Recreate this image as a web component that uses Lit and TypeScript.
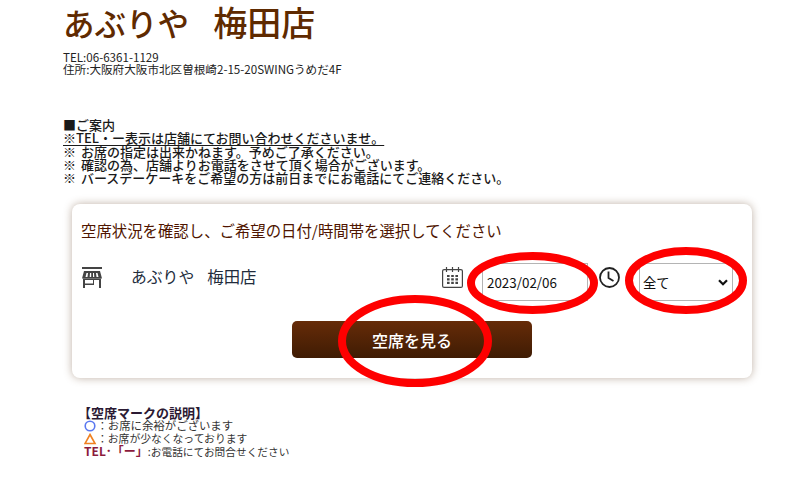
import { LitElement, html, css } from "lit";
import { customElement } from "lit/decorators.js";

@customElement("app-root")
export class AppRoot extends LitElement {
  static styles = css`
    :host {
      display: block;
      position: relative;
      width: 812px;
      height: 478px;
      overflow: hidden;
      background: #fff;
      font-family: "Noto Sans CJK JP", "Liberation Sans", sans-serif;
      color: #222;
    }
    .head { padding: 3px 0 0 63px; }
    h1 {
      margin: 0;
      font-size: 31.5px;
      line-height: 38px;
      font-weight: 500;
      color: #5f2a00;
      white-space: pre;
      word-spacing: 5px;
    }
    h1 span { font-size: 34px; line-height: 38px; }
    .contact {
      margin-top: 10px;
      font-size: 11.6px;
      line-height: 12px;
      color: #222;
    }
    .notice {
      margin: 43px 0 0 63px;
      font-size: 13px;
      line-height: 13.25px;
      font-weight: 500;
      color: #1a1a1a;
      white-space: pre;
      word-spacing: 2px;
    }
    .notice .u { text-decoration: underline; text-underline-offset: 2px; }
    .card {
      margin: 19.75px 0 0 72px;
      width: 680px;
      height: 174px;
      box-sizing: border-box;
      border-radius: 8px;
      background: #fff;
      box-shadow: 0 0 8px rgba(95, 60, 30, 0.4);
      padding: 16px 19px 0 9px;
    }
    .card h2 {
      margin: 0;
      font-size: 15.4px;
      line-height: 21px;
      font-weight: 400;
      color: #4f1500;
      white-space: nowrap;
    }
    .row {
      display: flex;
      align-items: flex-start;
      height: 38px;
      margin-top: 22px;
    }
    .store-icon { width: 20px; height: 21px; display: block; margin: 4px 0 0 1px; }
    .store {
      margin: 3px 0 0 29px;
      font-size: 15.8px;
      line-height: 20px;
      color: #222c3c;
      white-space: pre;
      word-spacing: 3px;
      flex: 1;
    }
    .store span { font-size: 16.4px; }
    .cal { width: 21px; height: 21px; display: block; margin: 4px 0 0 0; }
    .field {
      box-sizing: border-box;
      height: 38px;
      background: #fff;
      border: 1px solid #b4b4b4;
      color: #111;
      display: flex;
      align-items: center;
      font-family: inherit;
    }
    .date { width: 106px; margin-left: 19px; padding-left: 4px; font-size: 13.4px; }
    .clock { width: 21px; height: 21px; display: block; margin: 4px 0 0 11px; }
    .sel {
      width: 94px;
      margin-left: 19px;
      padding: 0 4px 0 3px;
      justify-content: space-between;
      font-size: 13.3px;
    }
    .sel svg { width: 10px; height: 7px; display: block; }
    .btn-row { display: flex; justify-content: center; margin: 20px -10px 0 0; }
    .btn {
      width: 240px;
      height: 37px;
      border: none;
      border-radius: 5px;
      background: linear-gradient(#662b08, #3f1c04);
      color: #fff;
      font-family: inherit;
      font-size: 16px;
      font-weight: 500;
      padding: 0;
    }
    .legend {
      margin: 29px 0 0 84px;
      font-size: 10.8px;
      line-height: 12.4px;
      color: #333;
      white-space: pre;
    }
    .legend b { font-size: 13px; font-weight: 700; color: #2b1a33; margin-left: -6px; }
    .legend .wide { font-size: 11.4px; }
    .legend .tel { font-size: 12px; font-weight: 700; color: #8c1a3c; }
    .legend .tail { font-size: 10.7px; }
    .mark { display: inline-block; width: 13px; height: 12px; vertical-align: -2px; }
    .overlay { position: absolute; inset: 0; width: 812px; height: 478px; pointer-events: none; }
  `;

  render() {
    return html`
      <div class="head">
        <h1>あぶりや  <span>梅田店</span></h1>
        <div class="contact">TEL:06-6361-1129<br />住所:大阪府大阪市北区曽根崎2-15-20SWINGうめだ4F</div>
      </div>
      <div class="notice">■ご案内
<span class="u">※TEL・ー表示は店舗にてお問い合わせくださいませ。</span>
※ お席の指定は出来かねます。予めご了承ください。
※ 確認の為、店舗よりお電話をさせて頂く場合がございます。
※ バースデーケーキをご希望の方は前日までにお電話にてご連絡ください。</div>
      <div class="card">
        <h2>空席状況を確認し、ご希望の日付/時間帯を選択してください</h2>
        <div class="row">
          <svg class="store-icon" viewBox="0 0 20 21" fill="#444">
            <rect x="0" y="0" width="20" height="2" />
            <path fill-rule="evenodd" d="M2 4H18L20 11.5H0ZM4.5 6L3.5 10H5.5L6 6ZM8 6L7.7 10H9.2L9.2 6ZM11 6V10H12.3L12 6ZM14 6L14.5 10H16.5L15.5 6Z" />
            <path fill-rule="evenodd" d="M1 11.5H19V21H12V13H17V21H12V18H3V21H1ZM3 13V16.5H11V13Z" />
          </svg>
          <div class="store">あぶりや  <span>梅田店</span></div>
          <svg class="cal" viewBox="0 0 21 21" fill="none" stroke="#444">
            <rect x="0.6" y="2.6" width="19.8" height="17.8" rx="1.5" stroke-width="1.2" />
            <path d="M4.5 0v5M10.5 0v5M16.5 0v5" stroke-width="1.2" />
            <path d="M5 9h2.6M9.2 9h2.6M13.4 9h2.6M5 12.4h2.6M9.2 12.4h2.6M13.4 12.4h2.6M5 15.8h2.6M9.2 15.8h2.6M13.4 15.8h2.6" stroke-width="2.2" />
          </svg>
          <div class="field date">2023/02/06</div>
          <svg class="clock" viewBox="0 0 21 21" fill="none" stroke="#222">
            <circle cx="10.5" cy="10.5" r="9.5" stroke-width="1.8" />
            <path d="M9.5 4.5v6.5l5 3" stroke-width="1.8" />
          </svg>
          <div class="field sel">全て
            <svg viewBox="0 0 10 7" fill="none" stroke="#111" stroke-width="2.2"><path d="M1 1.2L5 5.2l4-4" /></svg>
          </div>
        </div>
        <div class="btn-row"><button class="btn">空席を見る</button></div>
      </div>
      <div class="legend"><b>【空席マークの説明】</b>
<svg class="mark" viewBox="0 0 13 12" fill="none" stroke="#5a78f0" stroke-width="1.6"><circle cx="6" cy="6" r="4.8" /></svg>：<span class="wide">お席に余裕がございます</span>
<svg class="mark" viewBox="0 0 13 12" fill="none" stroke="#f08020" stroke-width="1.6"><path d="M6 1.5L11 10.5H1z" /></svg>：お席が少なくなっております
<span class="tel">TEL･「ー」</span><span class="tail">:お電話にてお問合せください</span></div>
      <svg class="overlay" viewBox="0 0 812 478" fill="none" stroke="#fe0000" stroke-width="8">
        <ellipse cx="532.5" cy="283" rx="61.5" ry="27" />
        <ellipse cx="686" cy="280.5" rx="57" ry="29.5" />
        <ellipse cx="415" cy="341" rx="73" ry="42" />
      </svg>
    `;
  }
}
